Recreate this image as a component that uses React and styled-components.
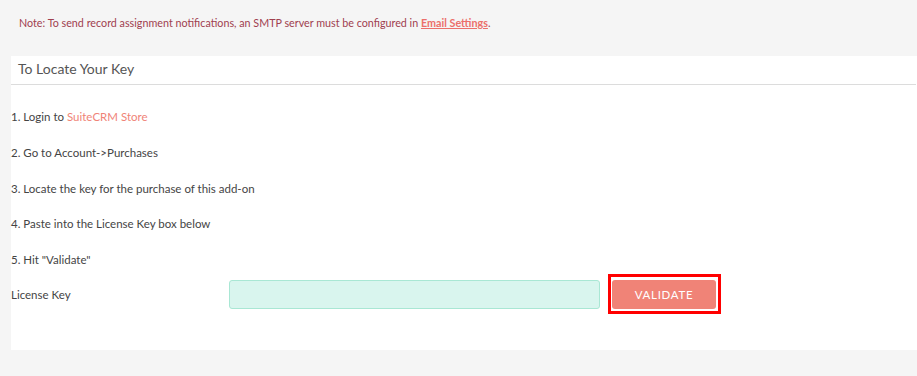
import React from 'react'
import styled, { createGlobalStyle } from 'styled-components'

const GlobalStyle = createGlobalStyle`
  html, body {
    margin: 0;
    padding: 0;
    background: #f5f5f5;
    font-family: Lato, 'Liberation Sans', sans-serif;
  }
`

const Page = styled.div`
  width: 917px;
  height: 376px;
  overflow: hidden;
  padding-top: 16px;
  box-sizing: border-box;
`

const Note = styled.p`
  margin: 0 0 0 19px;
  font-size: 10.75px;
  line-height: 14px;
  color: #a0404f;

  a {
    color: #ec6f6a;
    font-weight: bold;
    text-decoration: underline;
  }
`

const Panel = styled.section`
  margin: 26px 0 0 11px;
  background: #fff;
  height: 294px;
`

const PanelHeader = styled.h2`
  margin: 0 1px 0 0;
  padding: 4px 7px 0;
  height: 24px;
  font-size: 14px;
  font-weight: normal;
  color: #555;
  border-bottom: 1px solid #dcdcdc;
`

const Steps = styled.ol`
  list-style: none;
  margin: 0;
  padding: 25px 0 0;
  display: flex;
  flex-direction: column;
  gap: 21.8px;
`

const Step = styled.li`
  font-size: 11.5px;
  line-height: 14px;
  color: #444;

  a {
    color: #f08377;
    text-decoration: none;
  }
`

const KeyRow = styled.div`
  display: flex;
  align-items: center;
  margin-top: 7px;
`

const Label = styled.label`
  width: 218px;
  font-size: 11.5px;
  color: #444;
`

const KeyInput = styled.input`
  width: 371px;
  height: 29px;
  box-sizing: border-box;
  background: #d9f5ee;
  border: 1px solid #a9e7d4;
  border-radius: 3px;
  outline: none;
`

const Highlight = styled.span`
  display: inline-flex;
  margin-left: 8px;
  border: 3px solid #ff0000;
  padding: 3px 2px 2px 1px;
`

const ValidateButton = styled.button`
  width: 104px;
  height: 29px;
  background: #f08377;
  border: none;
  border-radius: 3px;
  color: #fff;
  font-family: Lato, 'Liberation Sans', sans-serif;
  font-size: 11.5px;
  letter-spacing: 0.7px;
  text-transform: uppercase;
`

const steps = [
  <>1. Login to <a href="#">SuiteCRM Store</a></>,
  '2. Go to Account->Purchases',
  '3. Locate the key for the purchase of this add-on',
  '4. Paste into the License Key box below',
  '5. Hit "Validate"',
]

const App = () => {
  return (
    <Page>
      <GlobalStyle />
      <Note>
        Note: To send record assignment notifications, an SMTP server must be configured in{' '}
        <a href="#">Email Settings</a>.
      </Note>
      <Panel>
        <PanelHeader>To Locate Your Key</PanelHeader>
        <Steps>
          {steps.map((s, i) => (
            <Step key={i}>{s}</Step>
          ))}
        </Steps>
        <KeyRow>
          <Label>License Key</Label>
          <KeyInput type="text" />
          <Highlight>
            <ValidateButton>Validate</ValidateButton>
          </Highlight>
        </KeyRow>
      </Panel>
    </Page>
  )
}

export default App
